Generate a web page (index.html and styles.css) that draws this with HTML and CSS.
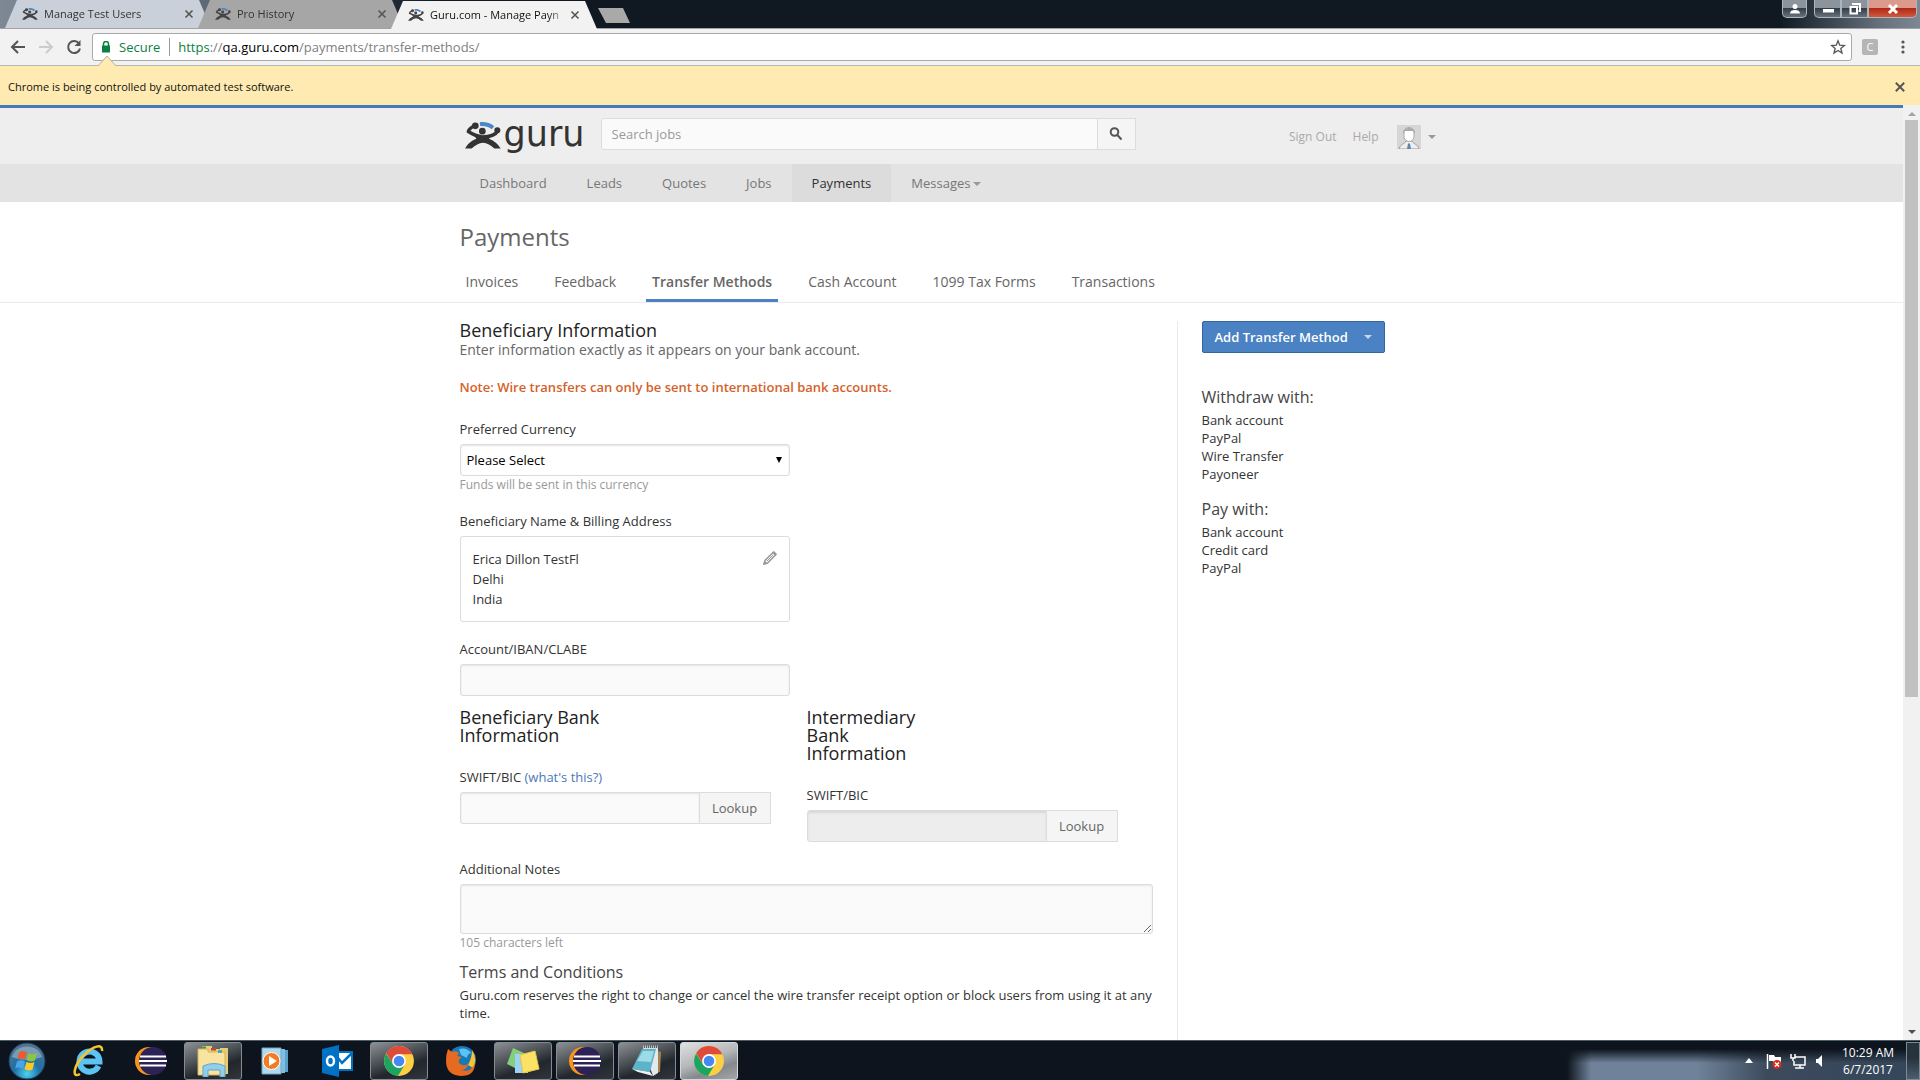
FILE: index.html
```html
<!DOCTYPE html>
<html lang="en">
<head>
<meta charset="utf-8">
<title>Guru.com - Manage Payments</title>
<link rel="stylesheet" href="styles.css">
</head>
<body>
<svg class="defs" aria-hidden="true">
  <symbol id="guru-man" viewBox="0 0 108 80">
    <path d="M44 0C60-2 76 2 88 12L80 21C70 13 58 11 46 12Z" fill="#4a86c8"/>
    <circle cx="52" cy="27" r="10"/>
    <circle cx="31" cy="11" r="10"/>
    <circle cx="97" cy="24" r="9"/>
    <path d="M26 12C18 17 10 23 10 28C22 36 36 43 52 44C74 44 92 38 98 27" fill="none" stroke="currentColor" stroke-width="10"/>
    <path d="M28 40Q52 48 80 40L72 50Q96 60 107 79H88Q72 64 54 62Q36 64 20 79H0Q10 60 34 50Z"/>
  </symbol>
  <symbol id="chrome" viewBox="0 0 30 30">
    <circle cx="15" cy="15" r="14" fill="#fdd044"/>
    <path d="M3 7.600A14 14 0 0 1 27.500 8.700H15L9.500 18.300Z" fill="#de4a3c"/>
    <path d="M2.900 8A14 14 0 0 0 14 29L20.500 18.300H9.500Z" fill="#1ba462"/>
    <circle cx="15" cy="15" r="6.500" fill="#fff"/>
    <circle cx="15" cy="15" r="5" fill="#4688f1"/>
  </symbol>
  <symbol id="eclipse" viewBox="0 0 32 32">
    <circle cx="14" cy="16" r="14" fill="#f7941e"/>
    <circle cx="18" cy="16" r="14" fill="#2c2255"/>
    <path d="M5 11.500H31M4 16H32M5 20.500H31" stroke="#fff" stroke-width="2"/>
  </symbol>
  <symbol id="cross" viewBox="0 0 10 10">
    <path d="M1.500 1.500L8.500 8.500M8.500 1.500L1.500 8.500" fill="none" stroke="currentColor" stroke-width="1.600"/>
  </symbol>
</svg>

<div class="titlebar">
  <div class="tabs">
    <div class="tab tab-hover"><svg class="favicon"><use href="#guru-man"/></svg><span class="tab-title">Manage Test Users</span><svg class="tab-close"><use href="#cross"/></svg></div>
    <div class="tab tab-idle"><svg class="favicon"><use href="#guru-man"/></svg><span class="tab-title">Pro History</span><svg class="tab-close"><use href="#cross"/></svg></div>
    <div class="tab tab-active"><svg class="favicon"><use href="#guru-man"/></svg><span class="tab-title">Guru.com - Manage Payn</span><svg class="tab-close"><use href="#cross"/></svg></div>
    <div class="tab-new"></div>
  </div>
  <div class="window-controls">
    <button class="win-btn win-user" aria-label="User"><svg width="12" height="12" viewBox="0 0 12 12"><circle cx="6" cy="3.500" r="2.500"/><path d="M1 10.500C1 8 3 7 6 7s5 1 5 3.500z"/></svg></button>
    <div class="win-group">
      <button class="win-btn" aria-label="Minimize"><svg width="12" height="12" viewBox="0 0 12 12"><rect x="1" y="6" width="11" height="3.500"/></svg></button>
      <button class="win-btn" aria-label="Restore"><svg width="12" height="12" viewBox="0 0 12 12"><path d="M4 2V1H11V8H9.500M1.500 4H8V10.500H1.500Z" fill="none" stroke="#fff" stroke-width="2"/></svg></button>
      <button class="win-btn win-close" aria-label="Close"><svg width="12" height="12" viewBox="0 0 12 12"><path d="M2 2L10 10M10 2L2 10" fill="none" stroke="#fff" stroke-width="3"/></svg></button>
    </div>
  </div>
</div>

<div class="toolbar">
  <button class="tool" aria-label="Back"><svg width="16" height="16" viewBox="0 0 16 16"><path d="M15 8H2M8 2L2 8L8 14"/></svg></button>
  <button class="tool tool-off" aria-label="Forward"><svg width="16" height="16" viewBox="0 0 16 16"><path d="M1 8H14M8 2L14 8L8 14"/></svg></button>
  <button class="tool" aria-label="Reload"><svg width="16" height="16" viewBox="0 0 16 16"><path d="M13 4.500A6 6 0 1 0 14 9.500"/><path d="M14.500 1V7H8.500Z" class="solid"/></svg></button>
  <div class="omnibox">
    <svg width="10" height="12" viewBox="0 0 10 12"><path d="M2.500 5V3a2.500 2.500 0 0 1 5 0v2" fill="none" stroke="#0b8043" stroke-width="1.500"/><rect x="1" y="4.500" width="8" height="7" fill="#0b8043"/></svg>
    <span class="secure">Secure</span>
    <span class="url"><span class="scheme">https</span>://<b>qa.guru.com</b>/payments/transfer-methods/</span>
    <svg class="star" width="16" height="16" viewBox="0 0 16 16"><path d="M8 1.800L9.700 6.200L14.400 6.500L10.800 9.500L12 14L8 11.500L4 14L5.200 9.500L1.600 6.500L6.300 6.200Z" fill="none" stroke="#555" stroke-width="1.300"/></svg>
  </div>
  <span class="extension">C</span>
  <button class="menu-dots" aria-label="Menu"><svg width="4" height="14" viewBox="0 0 4 14"><circle cx="2" cy="2" r="1.600"/><circle cx="2" cy="7" r="1.600"/><circle cx="2" cy="12" r="1.600"/></svg></button>
</div>

<div class="infobar">
  <svg class="info-arrow" width="18" height="11" viewBox="0 0 18 11"><path d="M0 11L9 1L18 11" fill="#ffebb2" stroke="#b9b09a"/></svg>
  <span>Chrome is being controlled by automated test software.</span>
  <button class="info-close" aria-label="Close"><svg width="12" height="12"><use href="#cross"/></svg></button>
</div>

<div class="viewport">
  <div class="page">
    <header class="site-header">
      <div class="container header-row">
        <a class="logo" href="#"><svg width="36" height="27"><use href="#guru-man"/></svg><span>guru</span></a>
        <form class="search">
          <input type="text" placeholder="Search jobs" aria-label="Search jobs">
          <button type="button" aria-label="Search"><svg width="14" height="14" viewBox="0 0 14 14"><circle cx="5.500" cy="5" r="3.800"/><path d="M8.300 8L12.500 12.500"/></svg></button>
        </form>
        <div class="account">
          <a href="#">Sign Out</a>
          <a href="#">Help</a>
          <svg class="avatar" width="24" height="24" viewBox="0 0 24 24"><rect width="24" height="24" fill="#d6d6d6"/><path d="M2 24C3 19 8 19 9 16H15C16 19 21 19 22 24Z" fill="#eee" stroke="#999"/><path d="M7 7C7 1 17 1 17 7V12C16 18 8 18 7 12Z" fill="#fff" stroke="#aaa"/><path d="M6 9C5 1 19 1 18 9L16 6H8Z" fill="#aaa"/><path d="M11 18.500H13L14 24H10Z" fill="#5b86ad"/></svg>
          <i class="caret"></i>
        </div>
      </div>
    </header>
    <nav class="main-nav">
      <div class="container">
        <a href="#">Dashboard</a><a href="#">Leads</a><a href="#">Quotes</a><a href="#">Jobs</a><a href="#" class="current">Payments</a><a href="#">Messages<i class="caret"></i></a>
      </div>
    </nav>
    <div class="page-head">
      <div class="container">
        <h1>Payments</h1>
        <nav class="sub-nav">
          <a href="#">Invoices</a><a href="#">Feedback</a><a href="#" class="current">Transfer Methods</a><a href="#">Cash Account</a><a href="#">1099 Tax Forms</a><a href="#">Transactions</a>
        </nav>
      </div>
    </div>
    <div class="container columns">
      <main class="main">
        <h2>Beneficiary Information</h2>
        <p class="lead">Enter information exactly as it appears on your bank account.</p>
        <p class="note">Note: Wire transfers can only be sent to international bank accounts.</p>

        <div class="field">
          <label for="currency">Preferred Currency</label>
          <div class="select-wrap"><select id="currency" class="control"><option>Please Select</option></select></div>
          <p class="hint">Funds will be sent in this currency</p>
        </div>
        <div class="field">
          <p class="label">Beneficiary Name &amp; Billing Address</p>
          <div class="address">
            <address>Erica Dillon TestFl<br>Delhi<br>India</address>
            <button class="edit" aria-label="Edit"><svg width="14" height="14" viewBox="0 0 14 14"><path d="M1 13L2 9.500L10 1.500L12.500 4L4.500 12Z" fill="none" stroke="#999" stroke-width="1.500"/><path d="M9 1.500L11 0L14 3L12.500 5ZM0 14L1.500 9.500L4.500 12.500Z" fill="#999"/><path d="M4 10L10 4" stroke="#999"/></svg></button>
          </div>
        </div>
        <div class="field">
          <label for="account">Account/IBAN/CLABE</label>
          <input id="account" class="control" type="text">
        </div>

        <div class="banks">
          <section>
            <h2>Beneficiary Bank Information</h2>
            <label for="swift">SWIFT/BIC <a href="#">(what's this?)</a></label>
            <div class="lookup"><input id="swift" type="text"><button type="button">Lookup</button></div>
          </section>
          <section>
            <h2>Intermediary Bank Information</h2>
            <label for="swift2">SWIFT/BIC</label>
            <div class="lookup"><input id="swift2" type="text" disabled><button type="button">Lookup</button></div>
          </section>
        </div>

        <div class="field">
          <label for="notes">Additional Notes</label>
          <textarea id="notes" class="control"></textarea>
          <p class="hint">105 characters left</p>
        </div>
        <section class="terms">
          <h3>Terms and Conditions</h3>
          <p>Guru.com reserves the right to change or cancel the wire transfer receipt option or block users from using it at any time.</p>
        </section>
      </main>
      <aside class="side">
        <button class="primary">Add Transfer Method<i class="caret"></i></button>
        <h3>Withdraw with:</h3>
        <ul><li>Bank account</li><li>PayPal</li><li>Wire Transfer</li><li>Payoneer</li></ul>
        <h3>Pay with:</h3>
        <ul><li>Bank account</li><li>Credit card</li><li>PayPal</li></ul>
      </aside>
    </div>
  </div>
  <div class="scrollbar">
    <span class="arrow up"></span>
    <span class="track"><span class="thumb"></span></span>
    <span class="arrow down"></span>
  </div>
</div>

<div class="taskbar">
  <button class="start" aria-label="Start"><svg width="38" height="38" viewBox="0 0 38 38">
    <defs><radialGradient id="orb" cx=".5" cy=".85" r=".8"><stop offset="0" stop-color="#4fd0f0"/><stop offset=".45" stop-color="#1f6fa5"/><stop offset="1" stop-color="#54738c"/></radialGradient></defs>
    <circle cx="19" cy="19" r="18" fill="url(#orb)" stroke="#16405f"/>
    <path d="M4 15C8 1 30 1 34 15C24 19 14 19 4 15Z" fill="#fff" opacity=".3"/>
    <path d="M11 10.500Q15 8 19 10.500L17 17.500Q13.500 15.500 9.500 17.500Z" fill="#ee5a29"/>
    <path d="M20.500 11Q24.500 13.500 29 11L27 18.500Q22.500 20.500 18.500 18Z" fill="#8cc63f"/>
    <path d="M9 19.500Q13 17 17 19.500L15 26.500Q11 24.500 7 26.500Z" fill="#4aa4e8"/>
    <path d="M18.500 20Q22.500 22 26.500 20L24.500 27.500Q20.500 29.500 16.500 27Z" fill="#fdc823"/>
  </svg></button>
  <button class="task" aria-label="Internet Explorer"><svg width="32" height="32" viewBox="0 0 32 32"><path d="M25.500 21A10 10 0 1 1 26.500 16.500H9" fill="none" stroke="#5cc3f2" stroke-width="6"/><path d="M7 29C-2 34 1 20 11 10C20 1 30-2 29 6" fill="none" stroke="#f8c42c" stroke-width="2.500"/></svg></button>
  <button class="task" aria-label="Eclipse"><svg width="32" height="32"><use href="#eclipse"/></svg></button>
  <button class="task open" aria-label="File Explorer"><svg width="34" height="32" viewBox="0 0 34 32"><path d="M6 4V1H16V4H24V3H32V29H6Z" fill="#e8cd78"/><path d="M2 7V4H12V7H29V30H2Z" fill="#f8e3a0" stroke="#d3b45e"/><path d="M6 2.500H10M15 4H20M22 6.500H26" stroke="#3f9b3b" stroke-width="2"/><path d="M15 4.500H20" stroke="#d33" stroke-width="2"/><path d="M22 6.500H26" stroke="#29a3e0" stroke-width="2"/><path d="M7 32V21Q18 16 29 21V32H24V25H12V32Z" fill="#92cdea" stroke="#5ba7cc"/></svg></button>
  <button class="task" aria-label="Media Player"><svg width="28" height="28" viewBox="0 0 28 28"><path d="M7 3H27V25H7Z" fill="#5aa0cc"/><path d="M4 2H24V26H4Z" fill="#82bede"/><path d="M1 1H20V27H1Z" fill="#b3d9ec" stroke="#6ba8cb"/><circle cx="10.500" cy="14" r="8.500" fill="#f47b20" stroke="#fff"/><path d="M8 9L16 14L8 19Z" fill="#fff"/></svg></button>
  <button class="task" aria-label="Outlook"><svg width="32" height="32" viewBox="0 0 32 32"><path d="M14 7H31V25H14Z" fill="#fff" stroke="#0072c6" stroke-width="2"/><path d="M17 13L21 18L31 8" fill="none" stroke="#0072c6" stroke-width="2.500"/><path d="M1 4L18 0V32L1 28Z" fill="#0072c6"/><ellipse cx="9.500" cy="16" rx="3.500" ry="4.500" fill="none" stroke="#fff" stroke-width="2.500"/></svg></button>
  <button class="task open" aria-label="Chrome"><svg width="32" height="32"><use href="#chrome"/></svg></button>
  <button class="task" aria-label="Firefox"><svg width="32" height="32" viewBox="0 0 32 32"><circle cx="17" cy="15" r="14" fill="#1679b8"/><path d="M14 4Q22 2 26 8Q22 9 22 13L16 10Z" fill="#5fc1ed"/><path d="M27 5Q33 14 28 23L23 20Q27 13 27 5Z" fill="#f9c22e"/><path d="M3 4L7 7Q11 5 14 8L12 11L17 12Q13 14 14 18Q18 22 23 19Q22 25 16 25Q26 28 30 18Q30 31 16 31Q1 30 1 16Q1 9 3 4Z" fill="#e66a20"/></svg></button>
  <button class="task open" aria-label="Sticky Notes"><svg width="34" height="30" viewBox="0 0 34 30"><path d="M7 2L20 8L13 24L1 18Z" fill="#83cf7c"/><path d="M9 8H22V27H9Z" fill="#9bd2f5"/><path d="M14 9L29 5L33 23L17 27Z" fill="#fbe267" stroke="#e3c748"/></svg></button>
  <button class="task open" aria-label="Eclipse"><svg width="32" height="32"><use href="#eclipse"/></svg></button>
  <button class="task open" aria-label="Notepad"><svg width="32" height="32" viewBox="0 0 32 32"><path d="M24 5L30 7L29 27L24 28Z" fill="#a4834e"/><path d="M12 3H27V28L22 31Z" fill="#e3e8ea"/><path d="M11 4H25L19 27L1 24Z" fill="#5cb4c9"/><path d="M12 6H23L20 17L6 16Z" fill="#9ddbe6"/><path d="M1 24L19 27L22 31L7 27Z" fill="#eef2f3"/><path d="M12 2H27" stroke="#bbb" stroke-width="3" stroke-dasharray="1 1"/></svg></button>
  <button class="task open focus" aria-label="Chrome"><svg width="32" height="32"><use href="#chrome"/></svg></button>
  <div class="tray">
    <svg width="8" height="5" viewBox="0 0 8 5"><path d="M0 5L4 0L8 5Z" fill="#fff"/></svg>
    <svg width="16" height="16" viewBox="0 0 16 16"><path d="M1.500 1V16" stroke="#fff" stroke-width="1.500"/><path d="M3 2H8L9 4H15V10H8L7 8H3Z" fill="#fff"/><circle cx="11" cy="11.500" r="4.500" fill="#d9281c"/><path d="M9 9.500L13 13.500M13 9.500L9 13.500" stroke="#fff" stroke-width="1.500"/></svg>
    <svg width="16" height="16" viewBox="0 0 16 16"><path d="M5 4H15V12H4V8M10 12V15M5 15H14M1 1V5H5V1M3 5V8" fill="none" stroke="#fff" stroke-width="1.500"/></svg>
    <svg width="12" height="14" viewBox="0 0 12 14"><path d="M2 5H4L8 1V13L4 9H2Z" fill="#fff"/></svg>
    <div class="clock"><span>10:29 AM</span><span>6/7/2017</span></div>
    <button class="show-desktop" aria-label="Show desktop"></button>
  </div>
</div>
</body>
</html>
```
FILE: styles.css
```css
* { box-sizing: border-box; }

html, body { height: 100%; }

body {
  margin: 0;
  display: flex;
  flex-direction: column;
  overflow: hidden;
  background: #fff;
  color: #333;
  font: 13px/18px "Open Sans", "Noto Sans", sans-serif;
}

h1, h2, h3, p, ul { margin: 0; padding: 0; font-weight: 400; }
ul { list-style: none; }
a { color: inherit; text-decoration: none; }
button { padding: 0; border: 0; background: none; font: inherit; color: inherit; }
input, select, textarea { font: inherit; }
svg { display: block; flex: none; fill: currentColor; }
.defs { position: absolute; width: 0; height: 0; }

/* window frame */
.titlebar {
  flex: none;
  display: flex;
  justify-content: space-between;
  height: 29px;
  background: linear-gradient(90deg, #7d8894 0, #5c6773 220px, #101922 440px, #101922 calc(100% - 140px), #66717c calc(100% - 40px), #7d8894 100%);
  border-bottom: 1px solid #a0a4a8;
}
.tabs { display: flex; align-items: flex-end; padding-left: 5px; }
.tab {
  display: flex;
  align-items: center;
  width: 206px;
  height: 28px;
  margin-right: -13px;
  padding: 0 17px;
  clip-path: polygon(0 100%, 12px 0, calc(100% - 12px) 0, 100% 100%);
  font-size: 11px;
  color: #333;
}
.tab-hover { background: #c9d0d9; }
.tab-idle { background: #a6a6a6; }
.tab-active { background: #f2f2f2; z-index: 1; margin-bottom: -1px; color: #111; }
.favicon { width: 16px; height: 12px; color: #444; }
.tab-title {
  flex: 1;
  margin: 0 2px 0 6px;
  white-space: nowrap;
  mask-image: linear-gradient(90deg, #000 calc(100% - 20px), transparent);
}
.tab-close { width: 10px; height: 10px; color: #555; }
.tab-new {
  width: 32px;
  height: 15px;
  margin: 0 0 5px 14px;
  background: #a9a9a9;
  clip-path: polygon(0 0, 25px 0, 100% 100%, 8px 100%);
}
.window-controls { display: flex; gap: 7px; height: 18px; padding-right: 3px; }
.win-group { display: flex; }
.win-btn {
  display: flex;
  align-items: center;
  justify-content: center;
  width: 27px;
  border: 1px solid #aeb6bd;
  border-top: 0;
  background: linear-gradient(#8b949d 45%, #343e48 50%, #66727d);
  color: #fff;
}
.win-user { width: 25px; border-radius: 0 0 5px 5px; }
.win-group .win-btn:first-child { border-radius: 0 0 0 5px; }
.win-close { width: 49px; border-radius: 0 0 5px 0; background: linear-gradient(#dc9a8c 45%, #b02a14 50%, #cf5a40); }

.toolbar {
  flex: none;
  display: flex;
  align-items: center;
  height: 37px;
  padding: 0 9px 0 10px;
  background: #f2f2f2;
  border-bottom: 1px solid #b6b4b0;
}
.tool { width: 16px; margin-right: 12px; color: #555; }
.tool svg { fill: none; stroke: currentColor; stroke-width: 2; }
.tool .solid { fill: currentColor; stroke: none; }
.tool-off { color: #ccc; }
.omnibox {
  flex: 1;
  display: flex;
  align-items: center;
  height: 28px;
  padding: 0 5px 0 8px;
  border: 1px solid #a9a9a9;
  border-radius: 3px;
  background: #fff;
  margin-left: -2px;
}
.secure { margin-left: 8px; padding-right: 9px; border-right: 1px solid #999; color: #0b8043; }
.url { flex: 1; margin-left: 8px; color: #808080; }
.url b { font-weight: 400; color: #000; }
.scheme { color: #0b8043; }
.extension {
  width: 16px;
  height: 16px;
  margin: 0 23px 0 10px;
  border-radius: 2px;
  background: #b5b5b5;
  color: #fff;
  font: 11px/16px "Open Sans", sans-serif;
  text-align: center;
}
.menu-dots { width: 4px; margin-right: 6px; color: #555; }

.infobar {
  flex: none;
  position: relative;
  display: flex;
  align-items: center;
  justify-content: space-between;
  height: 39px;
  padding: 3px 14px 0 8px;
  background: #ffebb2;
  color: #111;
  font-size: 11px;
}
.info-arrow { position: absolute; left: 98px; top: -11px; }
.info-close { color: #555; }

/* site */
.viewport { flex: 1; min-height: 0; display: flex; }
.page { flex: 1; overflow: hidden; border-top: 3px solid #437ab8; }
.container { width: 100%; max-width: 984px; margin: 0 auto; }
.caret {
  display: inline-block;
  border: 4px solid transparent;
  border-top-color: currentColor;
  border-bottom: 0;
}
.site-header { background: #eee; }
.header-row { display: flex; height: 56px; padding-top: 10px; align-items: flex-start; }
.logo { display: flex; width: 141px; padding-left: 5px; color: #333; }
.logo svg { margin-top: 4px; }
.logo span { margin: 2px 0 0 3px; font: 35px/28px "DejaVu Sans", sans-serif; }
.search { display: flex; width: 535px; height: 32px; }
.search input {
  flex: 1;
  min-width: 0;
  padding: 0 10px;
  border: 1px solid #dcdcdc;
  border-radius: 3px 0 0 3px;
  background: #fafafa;
}
.search input::placeholder { color: #999; }
.search button {
  display: flex;
  align-items: center;
  justify-content: center;
  width: 38px;
  border: 1px solid #dcdcdc;
  border-left: 0;
  background: #f5f5f5;
  color: #555;
}
.search button svg { fill: none; stroke: currentColor; stroke-width: 2; }
.account {
  display: flex;
  align-items: center;
  gap: 16px;
  margin-left: auto;
  padding: 7px 8px 0 0;
  color: #aaa;
  font-size: 12px;
}
.account .avatar { margin-left: 2px; }
.account .caret { margin-left: -9px; color: #999; }
.main-nav { background: #e3e3e3; color: #777; }
.main-nav .container { display: flex; }
.main-nav a { padding: 0 20px; line-height: 38px; }
.main-nav .current { background: #dcdcdc; color: #333; }
.main-nav .caret { margin-left: 3px; vertical-align: 2px; color: #999; }

.page-head { padding-top: 18px; border-bottom: 1px solid #ebebeb; }
h1 { color: #666; font-size: 24px; line-height: 34px; }
.sub-nav { display: flex; gap: 24px; margin-top: 8px; color: #666; font-size: 14px; line-height: 20px; }
.sub-nav a { padding: 10px 6px 7px; border-bottom: 3px solid transparent; }
.sub-nav .current { border-color: #4a82c3; font-weight: 600; }

.columns { display: flex; padding-top: 18px; }
.main { width: 718px; min-height: 900px; padding-right: 24px; border-right: 1px solid #ebebeb; }
h2 { color: #222; font-size: 18px; line-height: 18px; }
h3 { color: #444; font-size: 16px; line-height: 22px; }
.lead { color: #666; font-size: 14px; line-height: 22px; }
.note { margin: 17px 0 24px; color: #d4622a; font-weight: 600; }
label, .label { display: block; margin-bottom: 6px; }
.field { margin-bottom: 18px; }
.control {
  display: block;
  width: 330px;
  height: 32px;
  border: 1px solid #dcdcdc;
  border-radius: 3px;
  background: #fafafa;
  box-shadow: inset 0 1px 2px #e4e4e4;
}
.select-wrap { position: relative; width: 330px; }
.select-wrap::after {
  content: "";
  position: absolute;
  top: 13px;
  right: 8px;
  border: 3px solid transparent;
  border-top: 6px solid #000;
  border-bottom: 0;
}
select.control { appearance: none; padding: 0 6px; background: #fff; color: #000; }
textarea.control { width: 100%; height: 50px; }
.hint { color: #999; font-size: 12px; }
.address {
  display: flex;
  justify-content: space-between;
  align-items: flex-start;
  width: 330px;
  padding: 12px;
  border: 1px solid #dcdcdc;
  border-radius: 3px;
  line-height: 20px;
}
address { font-style: normal; }
.edit { margin-top: 2px; }
.banks { display: flex; gap: 17px; margin: -6px 0 18px; }
.banks section { width: 330px; }
.banks h2 { width: 144px; margin-bottom: 24px; }
.banks a { color: #4a78b8; }
.lookup { display: flex; width: 311px; height: 32px; }
.lookup input {
  flex: 1;
  min-width: 0;
  border: 1px solid #dcdcdc;
  border-radius: 3px 0 0 3px;
  background: #fafafa;
  box-shadow: inset 0 1px 2px #e4e4e4;
}
.lookup input:disabled { background: #ededed; box-shadow: inset 0 2px 2px #d8d8d8; }
.lookup button { width: 71px; border: 1px solid #dcdcdc; border-left: 0; background: #f5f5f5; color: #666; }
.terms { margin-top: -9px; }
.terms p { margin-top: 3px; }

.side { padding-left: 24px; }
.primary {
  display: flex;
  align-items: center;
  gap: 16px;
  height: 32px;
  margin-bottom: 33px;
  padding: 0 12px;
  border: 1px solid #33659f;
  border-radius: 2px;
  background: #4a82c3;
  color: #fff;
  font-weight: 600;
}
.primary .caret { color: #c5d6ec; }
.side ul { margin: 3px 0 15px; }

.scrollbar {
  display: flex;
  flex-direction: column;
  width: 17px;
  padding: 0 2px;
  background: #f1f1f1;
}
.arrow { width: 8px; height: 10px; border: 4px solid transparent; align-self: center; }
.track { flex: 1; }
.thumb { display: block; height: 64%; background: #c1c1c1; }
.up { border-bottom-color: #a3a3a3; margin: 1px 0 4px; }
.down { border-top-color: #505050; margin-top: 9px; }

/* taskbar */
.taskbar {
  flex: none;
  display: flex;
  align-items: center;
  gap: 4px;
  height: 40px;
  padding-left: 8px;
  border-top: 1px solid #4c5a64;
  background: #0d141d;
}
.start { width: 48px; }
.task {
  display: flex;
  align-items: center;
  justify-content: center;
  width: 58px;
  height: 38px;
  border: 1px solid transparent;
  border-radius: 3px;
}
.open { border-color: #868b90; background: linear-gradient(160deg, #8d9195 0, #4c5156 40%, #22272d 65%, #30363c); }
.focus { border-color: #d5d8da; background: linear-gradient(160deg, #e0e1e2 0, #b5b7b9 45%, #85888c 70%, #a5a8aa); }
.tray {
  display: flex;
  align-items: center;
  align-self: stretch;
  gap: 8px;
  margin-left: auto;
  padding-left: 178px;
  background: linear-gradient(#0d141d 8px, transparent 22px), linear-gradient(90deg, #0d141d, #6f8299 24px, #6f8299 130px, #3c4b5c 200px, #34465a);
  color: #fff;
}
.tray svg:first-child { margin-right: 5px; }
.clock { display: flex; flex-direction: column; width: 60px; margin-left: 4px; font-size: 12px; line-height: 17px; text-align: center; }
.show-desktop { width: 14px; height: 38px; border: 1px solid #7e8b96; background: linear-gradient(#26323c 40%, #4b5d6e); }
```
